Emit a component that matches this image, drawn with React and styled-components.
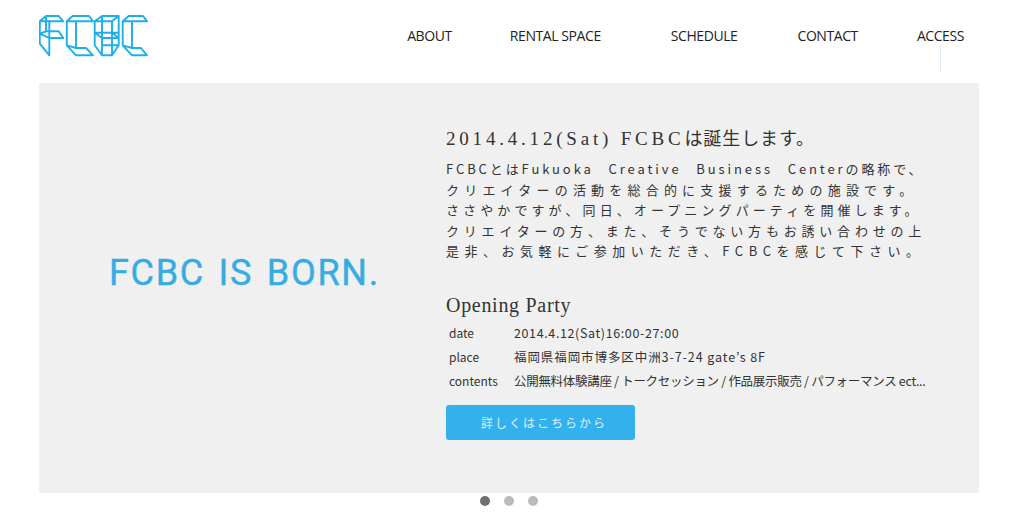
import React from 'react';
import styled, { createGlobalStyle } from 'styled-components';

const GlobalStyle = createGlobalStyle`
  html, body {
    margin: 0;
    padding: 0;
    background: #fff;
  }
`;

const Page = styled.div`
  width: 1024px;
  height: 520px;
  overflow: hidden;
  font-family: "Noto Sans CJK JP", "Noto Sans", sans-serif;
`;

const Header = styled.header`
  height: 83px;
  padding: 15px 60px 0 39px;
  box-sizing: border-box;
  display: flex;
  justify-content: space-between;
  align-items: flex-start;
`;

const LogoSvg = styled.svg`
  display: block;
  width: 110px;
  height: 44px;
`;

const Nav = styled.nav`
  display: flex;
  padding-top: 12px;
`;

const NavItem = styled.a`
  position: relative;
  font-family: "Open Sans", "Noto Sans", sans-serif;
  font-size: 14px;
  line-height: 18px;
  letter-spacing: -0.42px;
  color: #222;
  margin-left: ${p => p.$gap}px;
`;

const NavMark = styled.span`
  position: absolute;
  left: 23px;
  top: 18px;
  width: 1px;
  height: 28px;
  background: #e2eff8;
`;

const Panel = styled.section`
  margin: 0 45px 0 39px;
  height: 410px;
  background: #f0f0f0;
  display: flex;
`;

const Lead = styled.div`
  width: 407px;
  flex: none;
  padding: 168px 0 0 70px;
  box-sizing: border-box;
  font-family: "Roboto", "Noto Sans", sans-serif;
  font-size: 36px;
  font-weight: 400;
  -webkit-text-stroke: 0.4px #36ace3;
  line-height: 44px;
  letter-spacing: 1.7px;
  word-spacing: 3px;
  color: #36ace3;
  white-space: nowrap;
`;

const Detail = styled.div`
  padding-top: 42px;
  color: #333;
`;

const Title = styled.h2`
  margin: 0;
  font-family: "Liberation Serif", "Noto Sans CJK JP", serif;
  font-size: 19px;
  line-height: 24px;
  font-weight: 400;
  letter-spacing: 3.8px;
  white-space: nowrap;
`;

const TitleJa = styled.span`
  letter-spacing: 0.9px;
  font-family: "Noto Sans CJK JP", sans-serif;
  font-size: 18px;
`;

const Body = styled.p`
  margin: 8px 0 0;
  width: 490px;
`;

const BodyLine = styled.span`
  display: block;
  font-size: 13px;
  line-height: 20.5px;
  letter-spacing: ${p => p.$spacing}px;
  word-spacing: ${p => p.$words || 0}px;
  white-space: nowrap;
`;

const SubTitle = styled.h3`
  margin: 30px 0 0;
  font-family: "Liberation Serif", serif;
  font-size: 20px;
  line-height: 26px;
  font-weight: 400;
  letter-spacing: 0.7px;
`;

const InfoList = styled.dl`
  margin: 3px 0 0;
`;

const InfoRow = styled.div`
  display: flex;
  height: 24px;
  align-items: center;
  padding-left: 3px;
  font-size: 12.5px;
  white-space: nowrap;
`;

const InfoKey = styled.dt`
  width: 65px;
  flex: none;
  font-size: 12px;
`;

const InfoValue = styled.dd`
  margin: 0;
  letter-spacing: ${p => p.$spacing}px;
`;

const MoreButton = styled.a`
  display: flex;
  align-items: center;
  justify-content: center;
  box-sizing: border-box;
  width: 189px;
  height: 35px;
  margin-top: 12px;
  padding-left: 7px;
  border-radius: 3px;
  background: #33b1ec;
  color: #dff3fd;
  font-size: 12px;
  letter-spacing: 2px;
`;

const Dots = styled.div`
  display: flex;
  justify-content: center;
  gap: 14px;
  padding: 3px 6px 0 0;
`;

const Dot = styled.span`
  width: 10px;
  height: 10px;
  border-radius: 50%;
  background: ${p => (p.$active ? '#6f6f6f' : '#bbb')};
`;

const navItems = [
  { label: 'ABOUT', gap: 0 },
  { label: 'RENTAL SPACE', gap: 58 },
  { label: 'SCHEDULE', gap: 70 },
  { label: 'CONTACT', gap: 60 },
  { label: 'ACCESS', gap: 59, mark: true },
];

const bodyLines = [
  { text: 'FCBCとはFukuoka Creative Business Centerの略称で、', spacing: 2.9, words: 9 },
  { text: 'クリエイターの活動を総合的に支援するための施設です。', spacing: 5.2 },
  { text: 'ささやかですが、同日、オープニングパーティを開催します。', spacing: 4.1 },
  { text: 'クリエイターの方、また、そうでない方もお誘い合わせの上', spacing: 4.8 },
  { text: '是非、お気軽にご参加いただき、FCBCを感じて下さい。', spacing: 5.5 },
];

const info = [
  { key: 'date', value: '2014.4.12(Sat)16:00-27:00', spacing: 0.62 },
  { key: 'place', value: '福岡県福岡市博多区中洲3-7-24 gate’s 8F', spacing: 0.92 },
  { key: 'contents', value: '公開無料体験講座 / トークセッション / 作品展示販売 / パフォーマンス ect...', spacing: -0.3 },
];

const Logo = () => (
  <LogoSvg viewBox="0 0 110 44" fill="none" stroke="#1eaeea" strokeWidth="1.9" strokeLinejoin="round">
    {/* F */}
    <path d="M.8 6.3 7 1H19.7L24.3 6.3H.8V28.7L10.3 40.3V6.3M.8 18.7 7 16.3H19.7L24.3 23H10.3L.8 18.7M7 1V16.3" />
    {/* C */}
    <path d="M27.8 6.3 33.7 1H50L54 6.3H27.8V30.3L37 40.3H54L47 33H37V6.3M37 33 27.8 30.3" />
    {/* B */}
    <path d="M55.7 6.3 63 1H79.7V30.3L73 40.3H63L55.7 30.3ZM55.7 6.3H73V40.3M63 1V40.3M79.7 1 73 6.3M55.7 17.7H79.7M55.7 17.7 63 23H79.7L73 17.7M63 30.3H79.7" />
    {/* C */}
    <path d="M83.7 6.3 89.7 1H104L108 6.3H83.7V30.3L93 40.3H108L102 33H93V6.3M93 33 83.7 30.3" />
  </LogoSvg>
);

const App = () => (
  <Page>
    <GlobalStyle />
    <Header>
      <Logo />
      <Nav>
        {navItems.map(item => (
          <NavItem key={item.label} $gap={item.gap}>
            {item.label}
            {item.mark && <NavMark />}
          </NavItem>
        ))}
      </Nav>
    </Header>
    <Panel>
      <Lead>FCBC IS BORN.</Lead>
      <Detail>
        <Title>2014.4.12(Sat) FCBC<TitleJa>は誕生します。</TitleJa></Title>
        <Body>
          {bodyLines.map(line => (
            <BodyLine key={line.text} $spacing={line.spacing} $words={line.words}>{line.text}</BodyLine>
          ))}
        </Body>
        <SubTitle>Opening Party</SubTitle>
        <InfoList>
          {info.map(row => (
            <InfoRow key={row.key}>
              <InfoKey>{row.key}</InfoKey>
              <InfoValue $spacing={row.spacing}>{row.value}</InfoValue>
            </InfoRow>
          ))}
        </InfoList>
        <MoreButton>詳しくはこちらから</MoreButton>
      </Detail>
    </Panel>
    <Dots>
      <Dot $active />
      <Dot />
      <Dot />
    </Dots>
  </Page>
);

export default App;
